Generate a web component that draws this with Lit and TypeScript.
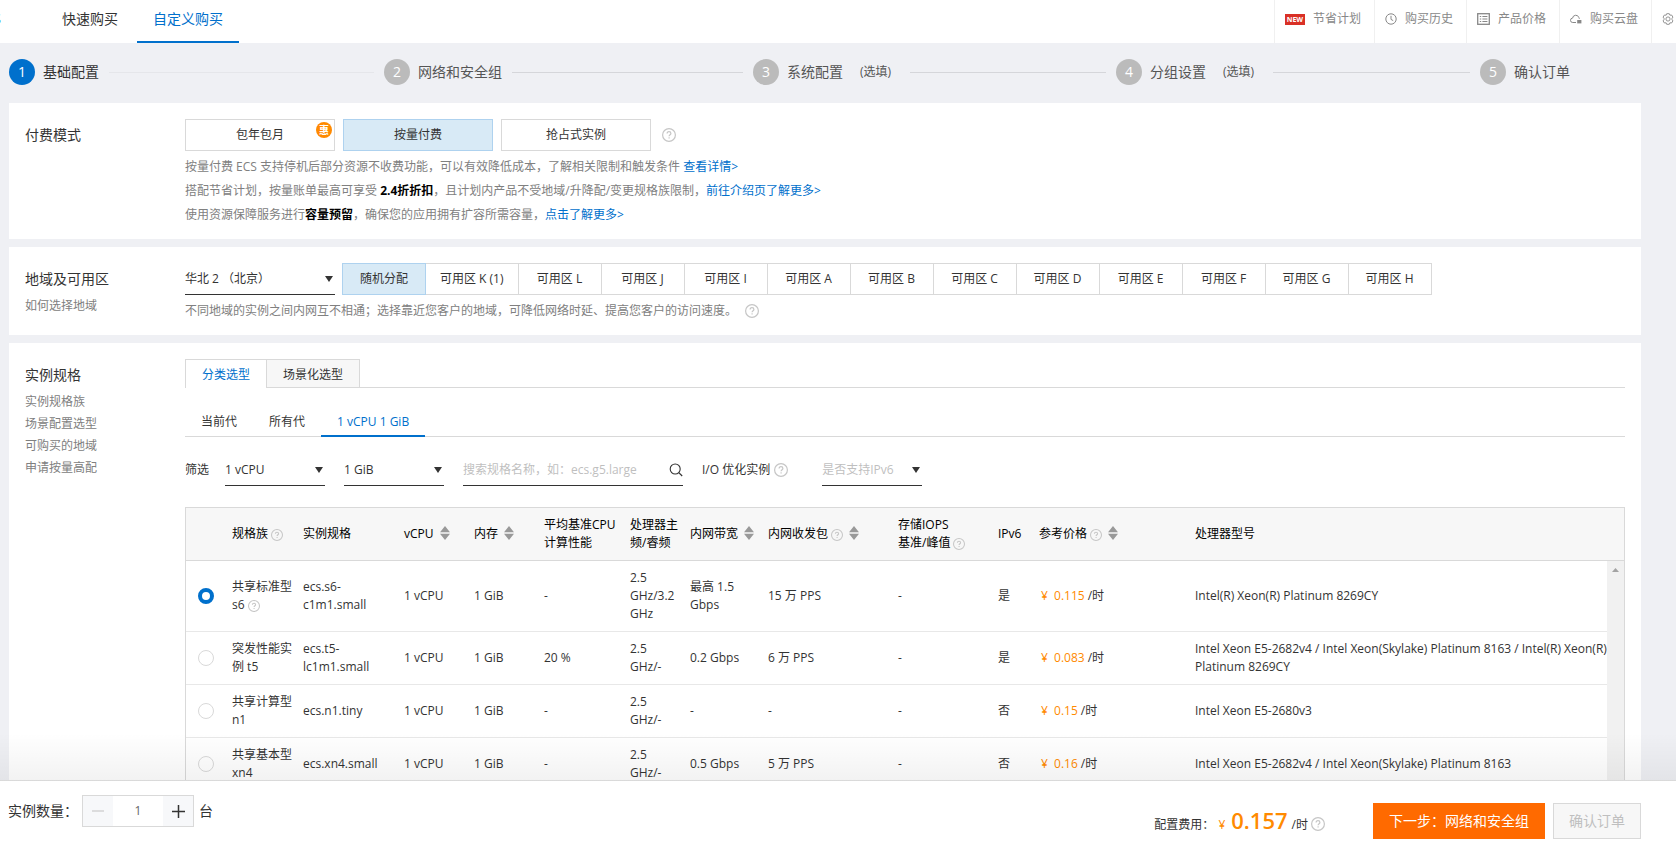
import { LitElement, css, html, svg, nothing } from "lit";
import { customElement, state } from "lit/decorators.js";
import { classMap } from "lit/directives/class-map.js";

const helpIcon = (size: number) => html`<svg class="help" width=${size} height=${size} viewBox="0 0 14 14" role="img" aria-label="帮助">
    <circle cx="7" cy="7" r="6.4" fill="none" stroke="currentColor" stroke-width="1.2" />
    <path d="M5.1 5.6C5.1 4.4 5.9 3.7 7 3.7S8.9 4.4 8.9 5.4C8.9 6.7 7.1 6.7 7.1 8.3" fill="none" stroke="currentColor" stroke-width="1.2" />
    <rect x="6.5" y="9.3" width="1.2" height="1.2" fill="currentColor" />
  </svg>`;

const sortIcon = html`<svg class="sort" width="10" height="14" viewBox="0 0 10 14" aria-hidden="true">
    <path d="M5 0L10 6.2H0zM0 7.8H10L5 14z" fill="#999" />
  </svg>`;

const caret = html`<svg class="caret" width="8" height="6" viewBox="0 0 8 6" aria-hidden="true">
    <path d="M0 0H8L4 6z" fill="currentColor" />
  </svg>`;

const clockIcon = svg`
  <circle cx="6" cy="6" r="5.2" fill="none" stroke="currentColor" />
  <path d="M6 2.8V6.4L8.2 7.6" fill="none" stroke="currentColor" />`;

const listIcon = svg`
  <rect x="0.7" y="0.7" width="11.6" height="10.6" fill="none" stroke="currentColor" stroke-width="1.3" />
  <path d="M2.8 3.5H4.2M5.4 3.5H10.4M2.8 6H4.2M5.4 6H10.4M2.8 8.5H4.2M5.4 8.5H10.4" stroke="currentColor" stroke-width="1.2" />`;

const cloudIcon = svg`
  <path d="M6 9.5H2.8A2.2 2.2 0 0 1 2.6 5.1A3.2 3.2 0 0 1 8.8 4.4L9.4 5.8" fill="none" stroke="currentColor" />
  <path d="M7.2 7H11.4V10.4H7.2z" fill="currentColor" />`;

const gearIcon = svg`
  <path d="M4.7 0.7H7.3L7.9 2.2L9.6 2L10.9 4.1L10 5.4V6.6L10.9 7.9L9.6 10L7.9 9.8L7.3 11.3H4.7L4.1 9.8L2.4 10L1.1 7.9L2 6.6V5.4L1.1 4.1L2.4 2L4.1 2.2z" fill="none" stroke="currentColor" stroke-width="0.9" />
  <circle cx="6" cy="6" r="2.1" fill="none" stroke="currentColor" stroke-width="0.9" />`;

interface Step {
  label: string;
  optional?: boolean;
}

interface Spec {
  family: string;
  help?: boolean;
  type: string;
  base: string;
  freq: string;
  band: string;
  pps: string;
  ipv6: string;
  price: string;
  cpu: string;
}

const STEPS: Step[] = [
  { label: "基础配置" },
  { label: "网络和安全组" },
  { label: "系统配置", optional: true },
  { label: "分组设置", optional: true },
  { label: "确认订单" },
];

const ZONES = ["随机分配", "可用区 K (1)", "可用区 L", "可用区 J", "可用区 I", "可用区 A", "可用区 B", "可用区 C", "可用区 D", "可用区 E", "可用区 F", "可用区 G", "可用区 H"];

const SPECS: Spec[] = [
  { family: "共享标准型 s6", help: true, type: "ecs.s6-c1m1.small", base: "-", freq: "2.5 GHz/3.2 GHz", band: "最高 1.5 Gbps", pps: "15 万 PPS", ipv6: "是", price: "0.115", cpu: "Intel(R) Xeon(R) Platinum 8269CY" },
  { family: "突发性能实例 t5", type: "ecs.t5-lc1m1.small", base: "20 %", freq: "2.5 GHz/-", band: "0.2 Gbps", pps: "6 万 PPS", ipv6: "是", price: "0.083", cpu: "Intel Xeon E5-2682v4 / Intel Xeon(Skylake) Platinum 8163 / Intel(R) Xeon(R) Platinum 8269CY" },
  { family: "共享计算型 n1", type: "ecs.n1.tiny", base: "-", freq: "2.5 GHz/-", band: "-", pps: "-", ipv6: "否", price: "0.15", cpu: "Intel Xeon E5-2680v3" },
  { family: "共享基本型 xn4", type: "ecs.xn4.small", base: "-", freq: "2.5 GHz/-", band: "0.5 Gbps", pps: "5 万 PPS", ipv6: "否", price: "0.16", cpu: "Intel Xeon E5-2682v4 / Intel Xeon(Skylake) Platinum 8163" },
];

@customElement("app-root")
export class AppRoot extends LitElement {
  @state() private pay = 1;
  @state() private zone = 0;
  @state() private spec = 0;
  @state() private count = 1;

  static styles = css`
    :host {
      display: flex;
      flex-direction: column;
      height: 100vh;
      overflow: hidden;
      background: #eff0f4;
      color: #333;
      font: 12px/18px "Open Sans", "Noto Sans CJK SC", sans-serif;
    }
    * { box-sizing: border-box; }
    button, input, select { font: inherit; color: inherit; margin: 0; border-radius: 0; }
    button { cursor: pointer; white-space: nowrap; }
    a { color: #0070cc; text-decoration: none; }
    svg { flex: none; }
    .help { color: #c6c6c6; }

    .top { display: flex; height: 43px; flex: none; background: #fff; }
    .brand { width: 1px; overflow: hidden; display: flex; justify-content: flex-end; align-items: center; padding-bottom: 5px; white-space: nowrap; font-size: 14px; }
    .tabs { display: flex; gap: 3px; margin-left: 45px; }
    .tab { display: flex; align-items: center; padding: 0 16px 3px; border-bottom: 2px solid transparent; font-size: 14px; color: #333; }
    .tab.on { color: #0070cc; border-color: #0070cc; }
    .tools { display: flex; margin-left: auto; }
    .tool { display: flex; align-items: center; gap: 8px; padding: 0 13px 5px 10px; border-left: 1px solid #f0f0f0; color: #888; white-space: nowrap; }
    .tool.last { padding-right: 2px; }
    .new { width: 20px; height: 11px; background: #d93026; color: #fff; font-size: 7px; line-height: 11px; font-weight: 700; text-align: center; }

    main { flex: 1; min-height: 0; overflow-y: auto; scrollbar-width: none; padding: 0 35px 0 9px; }
    .steps { display: grid; grid-template-columns: 375fr 369fr 363fr 364fr 161fr; height: 60px; padding: 16px 0 18px; margin: 0; list-style: none; }
    .step { display: flex; align-items: center; gap: 8px; font-size: 14px; color: #555; white-space: nowrap; }
    .step .num { width: 26px; height: 26px; flex: none; border-radius: 50%; background: #bbb; color: #fff; text-align: center; line-height: 26px; }
    .step .opt { font-size: 12px; margin: 0 9px; }
    .step .line { flex: 1; height: 1px; margin: 0 10px 0 2px; background: #d5d6da; }
    .step.on { color: #333; }
    .step.on .num { background: #0070cc; }
    .step.on .line { background: #e5e6ea; }

    .card { display: grid; grid-template-columns: 160px minmax(0, 1fr); padding: 16px 16px 12px; margin-bottom: 8px; background: #fff; }
    .side h2 { margin: 0; font-size: 14px; line-height: 32px; font-weight: 400; }
    .side a { display: block; line-height: 22px; color: #808080; }
    .row { display: flex; align-items: center; gap: 8px; }
    .row .help { margin-left: 3px; }
    .pick { position: relative; width: 150px; height: 32px; padding: 0; border: 1px solid #d9d9d9; background: #fff; }
    .pick.on, .zone.on { background: #d8eaf6; border-color: #aed2ef; z-index: 1; }
    .sale { position: absolute; top: 2px; right: 2px; width: 16px; height: 16px; border-radius: 50%; background: #ff8a00; color: #fff; font-size: 10px; line-height: 16px; font-weight: 700; text-align: center; }
    .notes { margin-top: 4px; line-height: 24px; color: #808080; }
    .notes p { margin: 0; }
    .notes b { color: #000; }
    .notes .help { vertical-align: -3px; margin-left: 8px; }

    .drop { position: relative; display: block; width: 100px; height: 32px; }
    .drop.wide { width: 150px; }
    .drop select { appearance: none; width: 100%; height: 100%; padding: 0 20px 0 0; border: 0; border-bottom: 1px solid #333; background: none; }
    .drop select.empty { color: #bfbfbf; }
    .caret { position: absolute; right: 2px; top: 13px; pointer-events: none; }
    .zones { display: flex; }
    .zone { position: relative; min-width: 84px; height: 32px; margin-left: -1px; padding: 0 14px; border: 1px solid #d9d9d9; background: #fff; }

    .modes { display: flex; border-bottom: 1px solid #d9d9d9; }
    .mode { height: 28px; padding: 0 16px; border: 1px solid #d9d9d9; border-bottom: 0; border-left: 0; background: #f7f7f7; line-height: 30px; }
    .mode.on { height: 29px; margin-bottom: -1px; border-left: 1px solid #d9d9d9; background: #fff; color: #0070cc; }
    .gens { display: flex; height: 29px; margin-top: 20px; border-bottom: 1px solid #d9d9d9; }
    .gen { height: 29px; padding: 0 16px; border: 0; border-bottom: 2px solid transparent; background: none; }
    .gen.on { color: #0070cc; border-color: #0070cc; font-weight: 500; }
    .filters { display: flex; align-items: center; gap: 19px; margin: 17px 0 21px; }
    .filters .name { margin-right: -3px; }
    .search { display: flex; align-items: center; width: 220px; height: 32px; border-bottom: 1px solid #333; }
    .search input { flex: 1; min-width: 0; padding: 0; border: 0; outline: 0; background: none; }
    .search input::placeholder { color: #bfbfbf; opacity: 1; }
    .io { display: flex; align-items: center; gap: 4px; margin-right: 15px; }

    .grid { position: relative; border: 1px solid #d9d9d9; }
    table { width: 100%; table-layout: fixed; border-collapse: separate; border-spacing: 0; }
    th, td { padding: 8px 2px 8px 8px; text-align: left; border-bottom: 1px solid #e8e8e8; font-weight: 400; }
    thead th { height: 53px; background: #f7f7f7; color: #000; border-color: #d9d9d9; white-space: nowrap; }
    th .help { margin-left: 3px; vertical-align: -3px; }
    th .sort { margin-left: 6px; vertical-align: -2px; }
    td .help { vertical-align: -3px; }
    td:first-child { padding: 0 0 0 12px; }
    td:last-child { padding-right: 17px; }
    .w-radio { width: 38px; } .w-family { width: 71px; } .w-type { width: 101px; } .w-s { width: 70px; }
    .w-base { width: 86px; } .w-freq { width: 60px; } .w-band { width: 78px; } .w-pps { width: 130px; }
    .w-iops { width: 100px; } .w-v6 { width: 41px; } .w-price { width: 156px; }
    input[type="radio"] { appearance: none; display: block; width: 16px; height: 16px; border: 1px solid #d9d9d9; border-radius: 50%; background: #fff; }
    input[type="radio"]:checked { border: 4px solid #0070cc; }
    .price { color: #ff8a00; margin: 0 3px 0 2px; white-space: pre; }
    .bar { position: absolute; top: 53px; right: 0; bottom: 0; width: 17px; display: flex; flex-direction: column; justify-content: space-between; align-items: center; padding: 7px 0; background: #f1f1f1; }

    footer { position: relative; flex: none; display: flex; align-items: flex-start; height: 69px; padding: 14px 35px 0 8px; border-top: 1px solid #e5e5e5; background: #fff; }
    footer::before { content: ""; position: absolute; left: 0; right: 0; bottom: 100%; height: 48px; background: linear-gradient(rgba(0, 0, 0, 0), rgba(0, 0, 0, 0.05)); pointer-events: none; }
    .qty { display: flex; align-items: center; font-size: 14px; }
    .stepper { display: flex; width: 112px; height: 32px; margin: 0 5px 0 4px; border: 1px solid #d9d9d9; }
    .stepper button { width: 30px; padding: 0; border: 0; background: #f7f8fa; color: #333; display: flex; align-items: center; justify-content: center; }
    .stepper button:disabled { color: #d0d0d0; }
    .stepper input { flex: 1; min-width: 0; padding: 0; border: 0; text-align: center; font-size: 12px; color: #666; }
    .pay { display: flex; align-items: flex-start; gap: 8px; margin: 8px 0 0 auto; }
    .cost { display: flex; align-items: baseline; margin-right: 40px; }
    .cost .yen { color: #ff8a00; margin: 0 6px 0 4px; }
    .cost .sum { color: #ff8a00; font-size: 22px; line-height: 34px; font-weight: 600; margin-right: 4px; }
    .cost .help { align-self: center; margin: 8px 0 0 3px; }
    .next, .confirm { height: 36px; padding: 0 16px; border: 0; background: #ff6a00; color: #fff; font-size: 14px; }
    .confirm { padding: 0 15px; border: 1px solid #d9d9d9; background: #f7f7f7; color: #bfbfbf; }
  `;

  private renderTop() {
    const tool = (icon: unknown, width: number, text: string) => html`
      <a class="tool" href="#"><svg width=${width} height="12" viewBox="0 0 ${width} 12" aria-hidden="true">${icon}</svg>${text}</a>`;
    return html`
      <header class="top">
        <a class="brand" href="#">ECS</a>
        <nav class="tabs">
          <a class="tab" href="#">快速购买</a>
          <a class="tab on" href="#">自定义购买</a>
        </nav>
        <nav class="tools">
          <a class="tool" href="#"><span class="new">NEW</span>节省计划</a>
          ${tool(clockIcon, 12, "购买历史")} ${tool(listIcon, 13, "产品价格")} ${tool(cloudIcon, 12, "购买云盘")}
          <a class="tool last" href="#" aria-label="设置"><svg width="12" height="12" viewBox="0 0 12 12">${gearIcon}</svg></a>
        </nav>
      </header>`;
  }

  private renderSteps() {
    return html`
      <ol class="steps">
        ${STEPS.map((s, i) => html`
          <li class=${classMap({ step: true, on: i === 0 })}>
            <span class="num">${i + 1}</span><span>${s.label}</span>
            ${s.optional ? html`<span class="opt">(选填)</span>` : nothing}
            ${i < STEPS.length - 1 ? html`<span class="line"></span>` : nothing}
          </li>`)}
      </ol>`;
  }

  private renderPay() {
    return html`
      <section class="card">
        <div class="side"><h2>付费模式</h2></div>
        <div>
          <div class="row">
            ${["包年包月", "按量付费", "抢占式实例"].map((t, i) => html`
              <button class=${classMap({ pick: true, on: i === this.pay })} aria-pressed=${i === this.pay} @click=${() => (this.pay = i)}>
                ${t}${i === 0 ? html`<span class="sale">惠</span>` : nothing}
              </button>`)}
            ${helpIcon(14)}
          </div>
          <div class="notes">
            <p>按量付费 ECS 支持停机后部分资源不收费功能，可以有效降低成本，了解相关限制和触发条件 <a href="#">查看详情&gt;</a></p>
            <p>搭配节省计划，按量账单最高可享受 <b>2.4折折扣</b>，且计划内产品不受地域/升降配/变更规格族限制，<a href="#">前往介绍页了解更多&gt;</a></p>
            <p>使用资源保障服务进行<b>容量预留</b>，确保您的应用拥有扩容所需容量，<a href="#">点击了解更多&gt;</a></p>
          </div>
        </div>
      </section>`;
  }

  private renderRegion() {
    return html`
      <section class="card">
        <div class="side"><h2>地域及可用区</h2><a href="#">如何选择地域</a></div>
        <div>
          <div class="row">
            <label class="drop wide"><select aria-label="地域"><option>华北 2 （北京）</option></select>${caret}</label>
            <div class="zones">
              ${ZONES.map((z, i) => html`
                <button class=${classMap({ zone: true, on: i === this.zone })} aria-pressed=${i === this.zone} @click=${() => (this.zone = i)}>${z}</button>`)}
            </div>
          </div>
          <div class="notes"><p>不同地域的实例之间内网互不相通；选择靠近您客户的地域，可降低网络时延、提高您客户的访问速度。${helpIcon(14)}</p></div>
        </div>
      </section>`;
  }

  private renderTable() {
    return html`
      <div class="grid">
        <table>
          <thead>
            <tr>
              <th class="w-radio" aria-label="选择"></th>
              <th class="w-family">规格族${helpIcon(12)}</th>
              <th class="w-type">实例规格</th>
              <th class="w-s">vCPU${sortIcon}</th>
              <th class="w-s">内存${sortIcon}</th>
              <th class="w-base">平均基准CPU<br />计算性能</th>
              <th class="w-freq">处理器主<br />频/睿频</th>
              <th class="w-band">内网带宽${sortIcon}</th>
              <th class="w-pps">内网收发包${helpIcon(12)}${sortIcon}</th>
              <th class="w-iops">存储IOPS<br />基准/峰值${helpIcon(12)}</th>
              <th class="w-v6">IPv6</th>
              <th class="w-price">参考价格${helpIcon(12)}${sortIcon}</th>
              <th>处理器型号</th>
            </tr>
          </thead>
          <tbody>
            ${SPECS.map((s, i) => html`
              <tr>
                <td><input type="radio" name="spec" aria-label=${s.type} .checked=${i === this.spec} @change=${() => (this.spec = i)} /></td>
                <td>${s.family} ${s.help ? helpIcon(12) : nothing}</td>
                <td>${s.type}</td>
                <td>1 vCPU</td>
                <td>1 GiB</td>
                <td>${s.base}</td>
                <td>${s.freq}</td>
                <td>${s.band}</td>
                <td>${s.pps}</td>
                <td>-</td>
                <td>${s.ipv6}</td>
                <td><span class="price">¥  ${s.price}</span>/时</td>
                <td>${s.cpu}</td>
              </tr>`)}
          </tbody>
        </table>
        <div class="bar" aria-hidden="true">
          <svg width="7" height="4" viewBox="0 0 7 4"><path d="M3.5 0L7 4H0z" fill="#a3a3a3" /></svg>
          <svg width="7" height="4" viewBox="0 0 7 4"><path d="M0 0H7L3.5 4z" fill="#a3a3a3" /></svg>
        </div>
      </div>`;
  }

  private renderSpecs() {
    return html`
      <section class="card">
        <div class="side">
          <h2>实例规格</h2>
          <a href="#">实例规格族</a><a href="#">场景配置选型</a><a href="#">可购买的地域</a><a href="#">申请按量高配</a>
        </div>
        <div>
          <div class="modes"><button class="mode on">分类选型</button><button class="mode">场景化选型</button></div>
          <div class="gens"><button class="gen">当前代</button><button class="gen">所有代</button><button class="gen on">1 vCPU 1 GiB</button></div>
          <div class="filters">
            <span class="name">筛选</span>
            <label class="drop"><select aria-label="vCPU"><option>1 vCPU</option></select>${caret}</label>
            <label class="drop"><select aria-label="内存"><option>1 GiB</option></select>${caret}</label>
            <label class="search">
              <input type="text" aria-label="搜索规格" placeholder="搜索规格名称，如：ecs.g5.large" />
              <svg width="14" height="14" viewBox="0 0 14 14" aria-hidden="true">
                <circle cx="6.2" cy="6" r="5" fill="none" stroke="#333" stroke-width="1.1" />
                <path d="M9.8 9.6L13.2 13" stroke="#333" stroke-width="1.2" />
              </svg>
            </label>
            <span class="io">I/O 优化实例${helpIcon(14)}</span>
            <label class="drop"><select class="empty" aria-label="IPv6"><option>是否支持IPv6</option></select>${caret}</label>
          </div>
          ${this.renderTable()}
        </div>
      </section>`;
  }

  private renderFooter() {
    return html`
      <footer>
        <div class="qty">
          <label for="qty">实例数量：</label>
          <div class="stepper">
            <button aria-label="减少" ?disabled=${this.count === 1} @click=${() => this.count--}>
              <svg width="12" height="12" viewBox="0 0 12 12"><path d="M0 6H12" stroke="currentColor" stroke-width="1.4" /></svg>
            </button>
            <input id="qty" type="text" .value=${String(this.count)} />
            <button aria-label="增加" @click=${() => this.count++}>
              <svg width="13" height="13" viewBox="0 0 13 13"><path d="M0 6.5H13M6.5 0V13" stroke="currentColor" stroke-width="1.5" /></svg>
            </button>
          </div>
          <span>台</span>
        </div>
        <div class="pay">
          <div class="cost">
            <span>配置费用：</span><span class="yen">¥</span><span class="sum">0.157</span><span>/时</span>${helpIcon(14)}
          </div>
          <button class="next">下一步：网络和安全组</button>
          <button class="confirm" disabled>确认订单</button>
        </div>
      </footer>`;
  }

  render() {
    return html`
      ${this.renderTop()}
      <main>${this.renderSteps()} ${this.renderPay()} ${this.renderRegion()} ${this.renderSpecs()}</main>
      ${this.renderFooter()}`;
  }
}
